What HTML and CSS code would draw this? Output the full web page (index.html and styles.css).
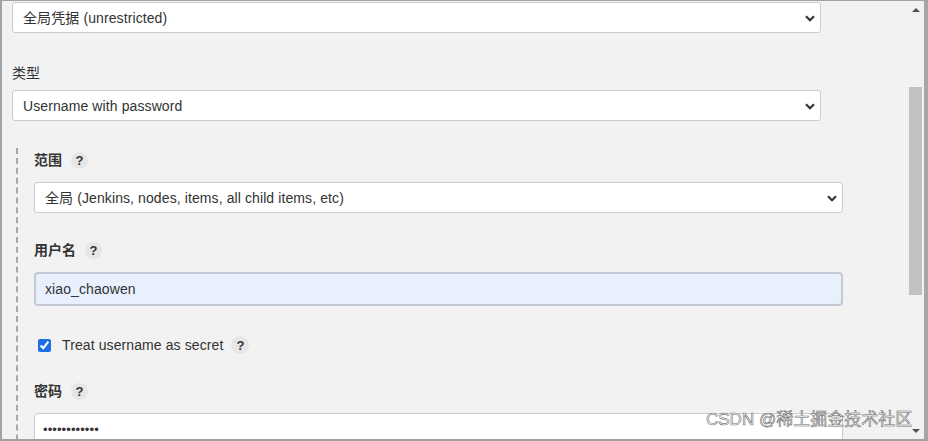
FILE: index.html
```html
<!DOCTYPE html>
<html lang="zh">
<head>
<meta charset="utf-8">
<title>Jenkins credentials</title>
<link rel="stylesheet" href="styles.css">
</head>
<body>
<div class="window">
  <div class="content">
    <div class="select first">
      <span>全局凭据 (unrestricted)</span>
      <svg class="chev" width="10" height="7" viewBox="0 0 10 7"><path d="M1 1.2 L5 5.2 L9 1.2" fill="none" stroke="#333" stroke-width="2.2"/></svg>
    </div>

    <div class="label top-label">类型</div>
    <div class="select">
      <span>Username with password</span>
      <svg class="chev" width="10" height="7" viewBox="0 0 10 7"><path d="M1 1.2 L5 5.2 L9 1.2" fill="none" stroke="#333" stroke-width="2.2"/></svg>
    </div>

    <div class="nested">
      <div class="label row scope-label">范围 <span class="help">?</span></div>
      <div class="select">
        <span>全局 (Jenkins, nodes, items, all child items, etc)</span>
        <svg class="chev" width="10" height="7" viewBox="0 0 10 7"><path d="M1 1.2 L5 5.2 L9 1.2" fill="none" stroke="#333" stroke-width="2.2"/></svg>
      </div>

      <div class="label row user-label">用户名 <span class="help">?</span></div>
      <input class="text autofill" type="text" value="xiao_chaowen">

      <div class="check-row">
        <input class="check" type="checkbox" checked>
        <span class="check-text">Treat username as secret</span>
        <span class="help">?</span>
      </div>

      <div class="label row pass-label">密码 <span class="help">?</span></div>
      <div class="text password">••••••••••••</div>
    </div>
  </div>

  <div class="scrollbar">
    <div class="arrow up"></div>
    <div class="track"><div class="thumb"></div></div>
    <div class="arrow down"></div>
  </div>

  <div class="watermark">CSDN @稀土掘金技术社区</div>
</div>
</body>
</html>
```

FILE: styles.css
```css
html, body {
  margin: 0;
  padding: 0;
  background: #f2f2f2;
}

body {
  font-family: "Liberation Sans", Arial, "Noto Sans CJK SC", sans-serif;
  font-size: 14px;
  color: #333;
}

.window {
  position: relative;
  box-sizing: border-box;
  width: 928px;
  height: 441px;
  border-top: 1px solid #a3a3a3;
  border-left: 2px solid #a3a3a3;
  border-right: 4px solid #a6a6a6;
  border-bottom: 2px solid #a3a3a3;
  background: #f2f2f2;
  display: flex;
  overflow: hidden;
}

.content {
  flex: 1;
  padding: 1px 0 0 10px;
  overflow: hidden;
}

.select {
  box-sizing: border-box;
  width: 809px;
  height: 31px;
  background: #fff;
  border: 1px solid #cbcbcb;
  border-radius: 3px;
  display: flex;
  align-items: center;
  justify-content: space-between;
  padding: 0 5px 0 10px;
  line-height: 1;
  letter-spacing: 0.1px;
}

.chev {
  display: block;
  margin-top: 1px;
}

.label {
  line-height: 20px;
  color: #333;
}

.top-label {
  margin-top: 30px;
  margin-bottom: 7px;
  height: 20px;
}

.row {
  display: flex;
  align-items: center;
  height: 22px;
  font-weight: bold;
  margin-bottom: 11px;
}

.help {
  display: inline-flex;
  align-items: center;
  justify-content: center;
  width: 17px;
  height: 17px;
  border-radius: 50%;
  background: #e6e6e6;
  color: #333;
  font-weight: bold;
  font-size: 13px;
  margin-left: 9px;
  line-height: 1;
}

.nested {
  margin: 27px 0 0 4px;
  padding: 1px 0 0 16px;
  border-left: 2px dashed #a9a9a9;
  height: 400px;
}

.scope-label {
  margin-top: 0;
}

.user-label {
  margin-top: 26px;
}

.text {
  box-sizing: border-box;
  display: block;
  width: 809px;
  height: 34px;
  margin: 0;
  font-family: inherit;
  font-size: 14px;
  color: #333;
  border-radius: 4px;
  padding: 0 9px;
  outline: none;
  letter-spacing: 0.1px;
}

.autofill {
  background: #e8f0fe;
  border: 2px solid #c3c9d3;
}

.check-row {
  display: flex;
  align-items: center;
  height: 20px;
  margin-top: 29px;
}

.check {
  width: 13px;
  height: 13px;
  margin: 0 11px 0 4px;
  accent-color: #1b6fe0;
}

.check-text {
  color: #333;
  letter-spacing: 0.1px;
}

.check-row .help {
  width: 18px;
  height: 18px;
  margin-left: 8px;
}

.pass-label {
  margin-top: 25px;
}

.password {
  background: #fff;
  border: 1px solid #cbcbcb;
  display: flex;
  align-items: flex-start;
  padding: 8px 8px 0 8px;
  font-size: 13px;
  height: 34px;
}

.scrollbar {
  width: 17px;
  display: flex;
  flex-direction: column;
  background: #f1f1f1;
}

.arrow {
  height: 17px;
  display: flex;
  align-items: center;
  justify-content: center;
}

.arrow::before {
  content: "";
  width: 0;
  height: 0;
  border-left: 4px solid transparent;
  border-right: 4px solid transparent;
}

.up::before {
  border-bottom: 4px solid #505050;
}

.down::before {
  border-top: 4px solid #505050;
}

.track {
  flex: 1;
  padding: 69px 2px 0 2px;
}

.thumb {
  height: 208px;
  background: #c1c1c1;
}

.watermark {
  position: absolute;
  left: 704px;
  top: 404px;
  font-family: "Liberation Sans", "Noto Sans CJK SC", sans-serif;
  font-size: 17px;
  color: rgba(255, 255, 255, 0.7);
  -webkit-text-stroke: 0.6px #6e6e6e;
  white-space: nowrap;
}
```
